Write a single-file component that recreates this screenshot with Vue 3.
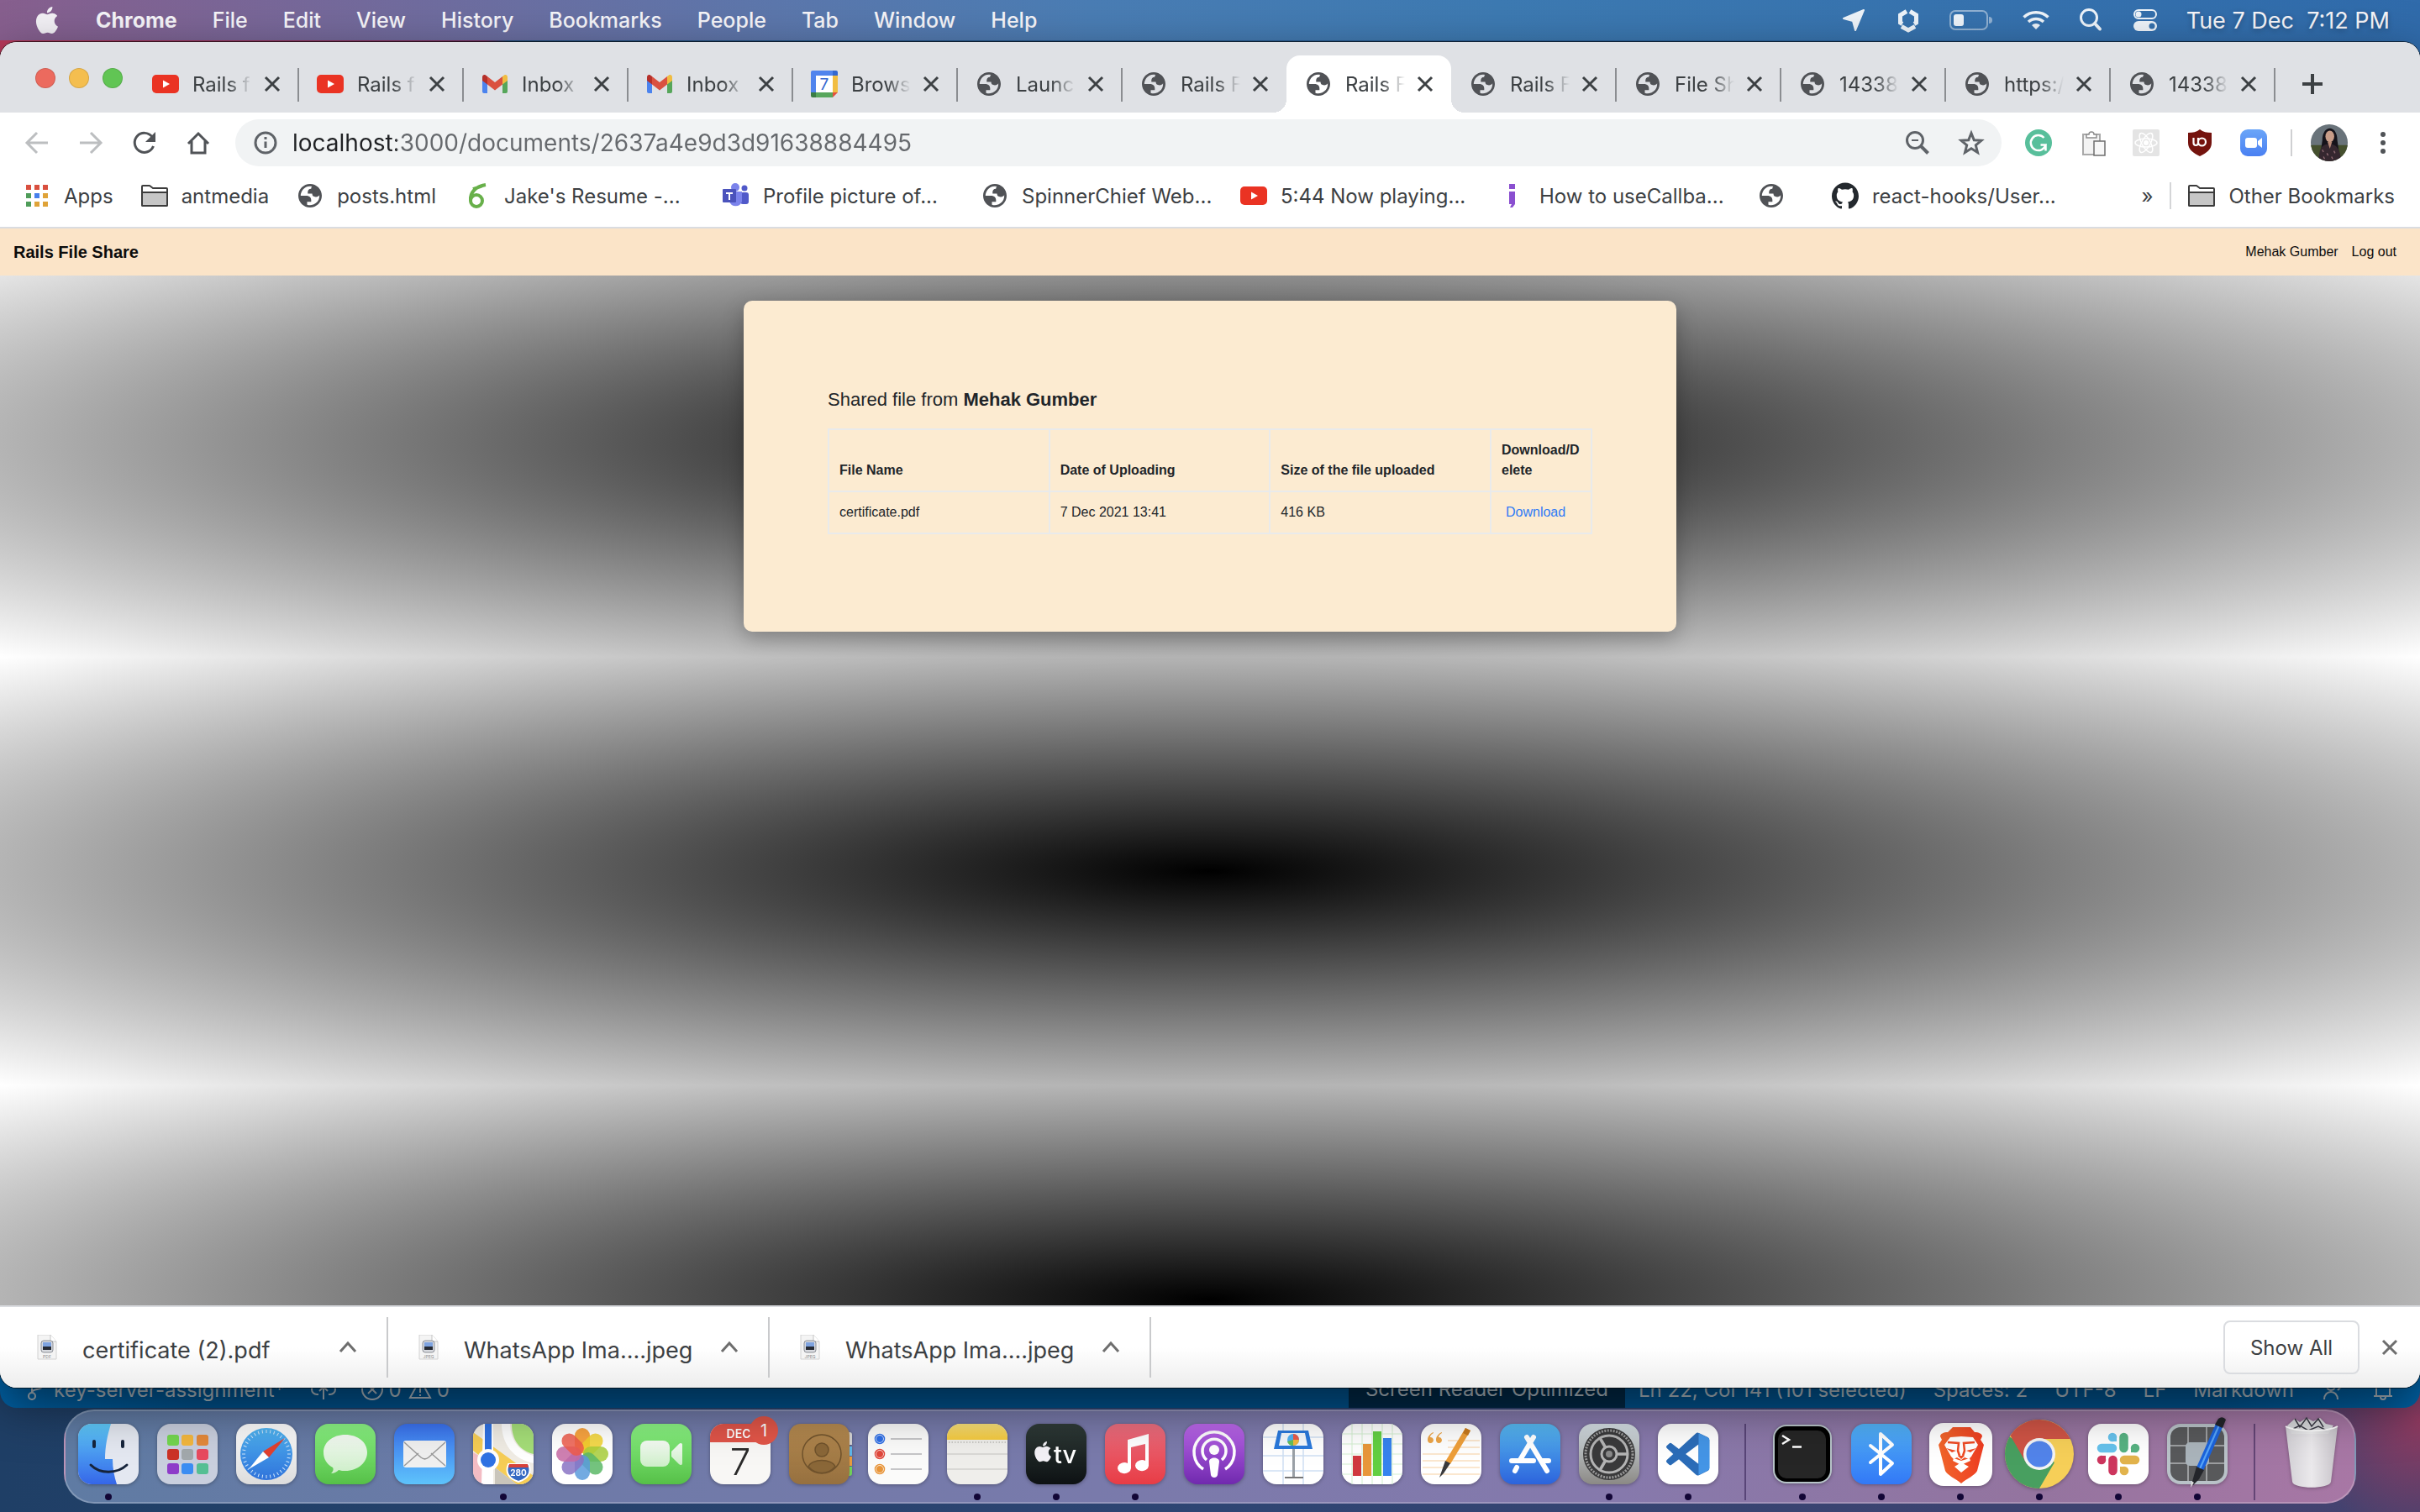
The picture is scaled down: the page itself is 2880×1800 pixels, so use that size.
<script setup>
const menus = ['File', 'Edit', 'View', 'History', 'Bookmarks', 'People', 'Tab', 'Window', 'Help']

const tabs = [
  { icon: 'youtube', title: 'Rails f' },
  { icon: 'youtube', title: 'Rails f' },
  { icon: 'gmail', title: 'Inbox' },
  { icon: 'gmail', title: 'Inbox' },
  { icon: 'calendar-fav', title: 'Brows' },
  { icon: 'globe', title: 'Launc' },
  { icon: 'globe', title: 'Rails F', bare: true },
  { icon: 'globe', title: 'Rails F', active: true },
  { icon: 'globe', title: 'Rails F' },
  { icon: 'globe', title: 'File Sh' },
  { icon: 'globe', title: '14338' },
  { icon: 'globe', title: 'https:/' },
  { icon: 'globe', title: '14338' },
]

const bookmarks = [
  { icon: 'apps', label: 'Apps' },
  { icon: 'folder', label: 'antmedia' },
  { icon: 'globe', label: 'posts.html' },
  { icon: 'overleaf', label: "Jake's Resume -...", wide: true },
  { icon: 'teams', label: 'Profile picture of...', wide: true },
  { icon: 'globe', label: 'SpinnerChief Web...', wide: true },
  { icon: 'youtube', label: '5:44 Now playing...', wide: true },
  { icon: 'semicolon', label: 'How to useCallba...', wide: true },
  { icon: 'globe', label: '' },
  { icon: 'github', label: 'react-hooks/User...', wide: true },
]

const extensions = ['grammarly', 'clipboard', 'react', 'ublock', 'zoom']

const downloads = [
  { name: 'certificate (2).pdf', kind: 'PDF' },
  { name: 'WhatsApp Ima....jpeg', kind: 'JPEG' },
  { name: 'WhatsApp Ima....jpeg', kind: 'JPEG' },
]

const files = [{ name: 'certificate.pdf', date: '7 Dec 2021 13:41', size: '416 KB' }]

const dock = [
  [
    { id: 'finder', open: true }, { id: 'launchpad' }, { id: 'safari' }, { id: 'messages' },
    { id: 'mail' }, { id: 'maps', open: true }, { id: 'photos' }, { id: 'facetime' },
    { id: 'calendar', badge: 1 }, { id: 'contacts' }, { id: 'reminders' }, { id: 'notes', open: true },
    { id: 'tv', open: true }, { id: 'music', open: true }, { id: 'podcasts' }, { id: 'keynote' },
    { id: 'numbers' }, { id: 'pages' }, { id: 'appstore' }, { id: 'preferences', open: true },
    { id: 'vscode', open: true },
  ],
  [
    { id: 'terminal', open: true }, { id: 'bluetooth', open: true }, { id: 'brave', open: true },
    { id: 'chrome', open: true }, { id: 'slack', open: true }, { id: 'xscope', open: true },
  ],
  [{ id: 'trash' }],
]

const ticks = Array.from({ length: 36 }, (_, i) => i * 10)
const petals = ['#f7941e', '#f2d22e', '#a8ce3a', '#5cb867', '#5b9bdc', '#8a74c4', '#c76aa5', '#ee5a4a']
</script>

<template>
  <div class="desktop">
    <svg class="defs" width="0" height="0" aria-hidden="true">
      <defs>
        <linearGradient id="gFinder" x2="0" y2="1"><stop stop-color="#5fcbfb" /><stop offset="1" stop-color="#3566e8" /></linearGradient>
        <linearGradient id="gPale" x2="0" y2="1"><stop stop-color="#fff" /><stop offset="1" stop-color="#dcdcdc" /></linearGradient>
        <linearGradient id="gGreen" x2="0" y2="1"><stop stop-color="#8bf484" /><stop offset="1" stop-color="#56c048" /></linearGradient>
        <linearGradient id="gBubble" x2="0" y2="1"><stop stop-color="#f6fcf5" /><stop offset="1" stop-color="#cdeec8" /></linearGradient>
        <linearGradient id="gMail" x2="0" y2="1"><stop stop-color="#3a70ee" /><stop offset="1" stop-color="#5ec3fb" /></linearGradient>
        <linearGradient id="gSafari" x2="0" y2="1"><stop stop-color="#4fb4f2" /><stop offset="1" stop-color="#2f72da" /></linearGradient>
        <linearGradient id="gRed" x2="0" y2="1"><stop stop-color="#ec6f80" /><stop offset="1" stop-color="#e83c45" /></linearGradient>
        <linearGradient id="gPurple" x2="0" y2="1"><stop stop-color="#bd68ec" /><stop offset="1" stop-color="#7029ae" /></linearGradient>
        <linearGradient id="gStore" x2="0" y2="1"><stop stop-color="#57b9f1" /><stop offset="1" stop-color="#2c63dc" /></linearGradient>
        <linearGradient id="gBt" x2="0" y2="1"><stop stop-color="#52b2f7" /><stop offset="1" stop-color="#3278f6" /></linearGradient>
        <linearGradient id="gTv" x2="0" y2="1"><stop stop-color="#2f3b38" /><stop offset="1" stop-color="#0d1113" /></linearGradient>
        <linearGradient id="gNote" x2="0" y2="1"><stop stop-color="#fbe27a" /><stop offset="1" stop-color="#f4c93e" /></linearGradient>
        <linearGradient id="gGrey" x2="0" y2="1"><stop stop-color="#d6e0e6" /><stop offset="1" stop-color="#8b8985" /></linearGradient>
        <linearGradient id="gBrown" x2="0" y2="1"><stop stop-color="#b58a50" /><stop offset="1" stop-color="#96703f" /></linearGradient>
        <linearGradient id="gBrave"><stop stop-color="#f1662b" /><stop offset="1" stop-color="#ee3d22" /></linearGradient>
        <linearGradient id="gZoom" x2="0" y2="1"><stop stop-color="#6aa5f8" /><stop offset="1" stop-color="#4a80f2" /></linearGradient>
        <linearGradient id="gTrash"><stop stop-color="#d5d5d8" /><stop offset=".5" stop-color="#f0f0f1" /><stop offset="1" stop-color="#c9c7cb" /></linearGradient>
        <clipPath id="tile"><rect width="72" height="72" rx="16" /></clipPath>
        <clipPath id="face"><circle cx="16" cy="16" r="16" /></clipPath>

        <!-- small icons, 32 x 32 -->
        <g id="i-youtube"><rect y="5" width="32" height="22" rx="5" fill="#ea3323" /><path d="M13 11.500v9l8-4.500z" fill="#fff" /></g>
        <g id="i-gmail">
          <path d="M1 8v17a2 2 0 0 0 2 2h4V13z" fill="#4b83ee" /><path d="M31 8v17a2 2 0 0 1-2 2h-4V13z" fill="#56a65a" />
          <path d="M25 7l2-1.500c2-1.300 4 .2 4 2.500v4l-6 4.500z" fill="#f0bc41" /><path d="M7 7L5 5.500C3 4.200 1 5.700 1 8v4l6 4.500z" fill="#b5302a" />
          <path d="M7 7l9 7 9-7v9.500l-9 7-9-7z" fill="#da5140" />
        </g>
        <g id="i-calendar-fav">
          <path d="M2 0h24v6H6v20H0V2a2 2 0 0 1 2-2z" fill="#5084ed" /><path d="M26 0h4a2 2 0 0 1 2 2v4h-6z" fill="#3367d0" />
          <path d="M26 6h6v20h-6z" fill="#f1bd42" /><path d="M6 26h20v6H6z" fill="#58a65c" /><path d="M0 26h6v6H2a2 2 0 0 1-2-2z" fill="#3a7d44" />
          <path d="M26 26h6l-6 6z" fill="#e4513f" /><path d="M6 6h20v20H6z" fill="#fff" />
          <text x="16" y="22.500" text-anchor="middle" font-size="19" font-family="Inter, sans-serif" fill="#3367d0">7</text>
        </g>
        <g id="i-globe"><path transform="translate(-.800 -.800) scale(1.400)" fill="#505256" fill-rule="evenodd" d="M12 2C6.480 2 2 6.480 2 12s4.480 10 10 10 10-4.480 10-10S17.520 2 12 2zM4 12h4.400c3.407.022 4.922 1.730 4.543 5.127H9.488v2.470a8.004 8.004 0 0 0 10.498-8.083C19.327 12.504 18.332 13 17 13c-2.137 0-3.206-.916-3.206-2.750h-3.748c-.274-2.728.683-4.092 2.870-4.092 0-.975.327-1.597.811-1.970A8.004 8.004 0 0 0 4 12z" /></g>
        <g id="i-apps">
          <path d="M3 3h6v6H3zM13 3h6v6h-6zM23 3h6v6h-6z" fill="#d9503f" /><path d="M3 13h6v6H3zM3 23h6v6H3z" fill="#4f9d5a" />
          <path d="M13 13h6v6h-6z" fill="#4680ec" /><path d="M23 13h6v6h-6zM13 23h6v6h-6zM23 23h6v6h-6z" fill="#dfa339" />
        </g>
        <g id="i-folder" stroke="#3c3c3c" stroke-width="2" stroke-linejoin="round"><path d="M1 27V5a1 1 0 0 1 1-1h8l4 3h16a1 1 0 0 1 1 1v19a1 1 0 0 1-1 1H2a1 1 0 0 1-1-1z" fill="#fff" /><path d="M1 12h30v15a1 1 0 0 1-1 1H2a1 1 0 0 1-1-1z" fill="#c6c6c6" /></g>
        <g id="i-overleaf" fill="none" stroke="#68b04a" stroke-width="4"><circle cx="15" cy="22" r="7" /><path d="M8 22C7 12 14 5 26 3M11 8c5-2 9-2 13-5" /></g>
        <g id="i-teams">
          <circle cx="15" cy="6" r="5" fill="#7b83eb" /><circle cx="26" cy="7" r="3.500" fill="#5059c9" /><rect x="21" y="12" width="10" height="14" rx="3" fill="#5059c9" />
          <path d="M8 11h15v12a8 8 0 0 1-15 0z" fill="#7b83eb" /><rect y="8" width="16" height="16" rx="1" fill="#4b53bc" /><path d="M4 12h8v2H9v7H7v-7H4z" fill="#fff" />
        </g>
        <g id="i-semicolon" fill="#8a4fd0"><path d="M12 2h7v6h-7zM12 11h7v15l-3 4h-3l2-4h-3z" /></g>
        <g id="i-github"><path transform="scale(1.333)" fill="#24292e" d="M12 .297c-6.630 0-12 5.373-12 12 0 5.303 3.438 9.800 8.205 11.385.6.113.820-.258.820-.577 0-.285-.010-1.040-.015-2.040-3.338.724-4.042-1.610-4.042-1.610C4.422 18.070 3.633 17.700 3.633 17.700c-1.087-.744.084-.729.084-.729 1.205.084 1.838 1.236 1.838 1.236 1.070 1.835 2.809 1.305 3.495.998.108-.776.417-1.305.760-1.605-2.665-.300-5.466-1.332-5.466-5.930 0-1.310.465-2.380 1.235-3.220-.135-.303-.540-1.523.105-3.176 0 0 1.005-.322 3.300 1.230.960-.267 1.980-.399 3-.405 1.020.006 2.040.138 3 .405 2.280-1.552 3.285-1.230 3.285-1.230.645 1.653.240 2.873.120 3.176.765.840 1.230 1.910 1.230 3.220 0 4.610-2.805 5.625-5.475 5.920.420.360.810 1.096.810 2.220 0 1.606-.015 2.896-.015 3.286 0 .315.210.690.825.570C20.565 22.092 24 17.592 24 12.297c0-6.627-5.373-12-12-12" /></g>
        <g id="i-back" fill="none" stroke="#bcbec0" stroke-width="3"><path d="M29 16H5M16 4L4 16l12 12" /></g>
        <g id="i-forward" fill="none" stroke="#bcbec0" stroke-width="3"><path d="M3 16h24M16 4l12 12-12 12" /></g>
        <g id="i-reload"><path d="M26.500 20A11.500 11.500 0 1 1 25 9" fill="none" stroke="#505357" stroke-width="3" /><path d="M29 3v12H17z" fill="#505357" /></g>
        <g id="i-home"><path d="M4 17L16 5l12 12M8 14v14h16V14" fill="none" stroke="#505357" stroke-width="3" /></g>
        <g id="i-info" fill="none" stroke="#5f6368" stroke-width="3"><circle cx="16" cy="16" r="12" /><path d="M16 14.500V22M16 9v3" /></g>
        <g id="i-zoomout" fill="none" stroke="#5f6368" stroke-width="3"><circle cx="13" cy="13" r="9.500" /><path d="M20 20l8.500 8.500" stroke-width="4" /><path d="M9 13h8" stroke-width="2" /></g>
        <g id="i-star"><path d="M16 4.500l3.300 8.200 8.700.6-6.700 5.600 2.200 8.600L16 22.800l-7.500 4.700 2.200-8.600L4 13.300l8.700-.6z" fill="none" stroke="#5f6368" stroke-width="3" /></g>
        <g id="i-grammarly"><circle cx="16" cy="16" r="16" fill="#58bf9b" /><path d="M22.500 10a9 9 0 1 0 2 8.500h-6M24.500 25.500v-7" fill="none" stroke="#fff" stroke-width="2.500" /></g>
        <g id="i-clipboard"><path d="M5 6h20v24H5z" fill="#f3f3f3" stroke="#a9a9a9" stroke-width="2" /><path d="M9 10V6h3c0-4 6-4 6 0h3v4z" fill="#fff" stroke="#8d8d8d" stroke-width="1.500" /><path d="M18 14h13v17H18z" fill="#f7f7f7" stroke="#6e6e6e" stroke-width="1.500" /></g>
        <g id="i-react"><rect width="32" height="32" rx="2" fill="#e4e4e4" /><g fill="none" stroke="#fff" stroke-width="1.500"><ellipse cx="16" cy="16" rx="13" ry="5" /><ellipse cx="16" cy="16" rx="13" ry="5" transform="rotate(60 16 16)" /><ellipse cx="16" cy="16" rx="13" ry="5" transform="rotate(120 16 16)" /></g><circle cx="16" cy="16" r="3" fill="#fff" /></g>
        <g id="i-ublock"><path d="M16 0c4 3 8 4 14 4v12c0 8-6 12-14 16C8 28 2 24 2 16V4c6 0 10-1 14-4z" fill="#74130e" /><path d="M8.500 10v6c0 4 5.500 4 5.500 0v-6M14 15a4.500 4.500 0 1 0 9 0 4.500 4.500 0 1 0-9 0" fill="none" stroke="#fff" stroke-width="2.200" /></g>
        <g id="i-zoom"><rect width="32" height="32" rx="9" fill="url(#gZoom)" /><rect x="6" y="10" width="14" height="12" rx="3" fill="#fff" /><path d="M21 14l5-4v12l-5-4z" fill="#fff" /></g>
        <g id="i-avatar" clip-path="url(#face)"><path d="M0 0h32v32H0z" fill="#69737a" /><path d="M0 18h32v14H0z" fill="#45502e" /><path d="M10 14c0-14 13-14 13 0l2 14H8z" fill="#15131a" /><path d="M7 32c0-12 3-15 9-15s10 4 10 15z" fill="#35272f" /><ellipse cx="16.500" cy="10.500" rx="3.800" ry="5" fill="#c79c88" /><path d="M14.500 15h4l-2 6z" fill="#b98a76" /><path d="M10 22l1 2M14 25l1 2M20 23l1 2M18 28l1 2M11 28l1 2" stroke="#8f6a72" /></g>
        <g id="i-dots" fill="#505357"><circle cx="16" cy="4" r="3" /><circle cx="16" cy="14" r="3" /><circle cx="16" cy="24" r="3" /></g>
        <g id="i-close" stroke="currentColor" stroke-width="3" fill="none"><path d="M8 8l16 16M24 8L8 24" /></g>
        <g id="i-plus" stroke="#3c4043" stroke-width="4" fill="none"><path d="M16 4v24M4 16h24" /></g>
        <g id="i-caret" stroke="#6e6e6e" stroke-width="3" fill="none"><path d="M7 21l9-10 9 10" /></g>
        <g id="i-apple"><path transform="scale(1.333)" d="M12.152 6.896c-.948 0-2.415-1.078-3.960-1.040-2.040.027-3.910 1.183-4.961 3.014-2.117 3.675-.546 9.103 1.519 12.090 1.013 1.454 2.208 3.090 3.792 3.039 1.520-.065 2.090-.987 3.935-.987 1.831 0 2.350.987 3.960.948 1.637-.026 2.676-1.480 3.676-2.948 1.156-1.688 1.636-3.325 1.662-3.415-.039-.013-3.182-1.221-3.220-4.857-.026-3.040 2.480-4.494 2.597-4.559-1.429-2.090-3.623-2.324-4.390-2.376-2-.156-3.675 1.090-4.610 1.090zM15.530 3.830c.843-1.012 1.400-2.427 1.245-3.830-1.207.052-2.662.805-3.532 1.818-.780.896-1.454 2.338-1.273 3.714 1.338.104 2.715-.688 3.559-1.701" fill="#f3f1f6" /></g>
        <g id="i-location"><path d="M28 4L18 28l-3-11L4 14z" fill="#eef4fa" stroke="#eef4fa" stroke-width="2" stroke-linejoin="round" /></g>
        <g id="i-hex" fill="none" stroke="#eef4fa" stroke-width="5"><path d="M14 5.500L6.500 10v9l2.500 1.500M18 5.500l7.500 4.500v9L23 20.500M8 23.500l8 4.500 8-4.500" /></g>
        <g id="i-wifi" fill="none" stroke="#eef4fa" stroke-width="3.500"><path d="M1.500 12.500a21 21 0 0 1 29 0M7 18a13 13 0 0 1 18 0" /><path d="M16 27l-5-5a7 7 0 0 1 10 0z" fill="#eef4fa" stroke="none" /></g>
        <g id="i-search" fill="none" stroke="#eef4fa" stroke-width="3"><circle cx="14" cy="13" r="9.500" /><path d="M21 20l6 6.500" stroke-width="4" stroke-linecap="round" /></g>
        <g id="i-control"><rect x="3" y="4" width="26" height="10" rx="5" fill="none" stroke="#eef4fa" stroke-width="2" /><circle cx="8" cy="9" r="3.500" fill="#eef4fa" /><rect x="2" y="17" width="28" height="12" rx="6" fill="#eef4fa" /><circle cx="24" cy="23" r="3.500" fill="#3570ac" /></g>
        <g id="i-branch" fill="none" stroke="#a9b5be" stroke-width="2"><circle cx="12" cy="24" r="4" /><circle cx="12" cy="5" r="4" /><circle cx="24" cy="8" r="4" /><path d="M12 9v11M24 12c0 6-12 2-12 8" /></g>
        <g id="i-cloud" fill="none" stroke="#a9b5be" stroke-width="2"><path d="M10 22H8a6 6 0 0 1 0-12 8 8 0 0 1 16 0 6 6 0 0 1 0 12h-2M16 28V14M11 18l5-5 5 5" /></g>
        <g id="i-error" fill="none" stroke="#a9b5be" stroke-width="2"><circle cx="16" cy="16" r="12" /><path d="M11 11l10 10M21 11L11 21" /></g>
        <g id="i-warn" fill="none" stroke="#a9b5be" stroke-width="2"><path d="M16 4l12 22H4zM16 12v8M16 22v2" /></g>
        <g id="i-person" fill="none" stroke="#a9b5be" stroke-width="2"><circle cx="12" cy="12" r="5" /><path d="M4 28c0-12 16-12 16 0M18 4h10v9h-4l-4 4" /></g>
        <g id="i-bell" fill="none" stroke="#a9b5be" stroke-width="2"><path d="M5 24h22M8 24V12a8 8 0 0 1 16 0v12M13 25a3 3 0 0 0 6 0" /></g>

        <!-- dock icons, 72 x 72 -->
        <g id="d-finder" clip-path="url(#tile)">
          <rect width="72" height="72" fill="#e4e8f1" /><path d="M0 0h39c-4 13-7 27-7 42h9c0 11 2 21 5 30H0z" fill="url(#gFinder)" />
          <path d="M19 21v6M53 21v6" stroke="#16243b" stroke-width="4" stroke-linecap="round" /><path d="M15 49c11 11 31 11 43 0" fill="none" stroke="#16243b" stroke-width="3" stroke-linecap="round" />
        </g>
        <g id="d-launchpad">
          <rect width="72" height="72" rx="16" fill="#c9cfde" />
          <rect x="12" y="13" width="14" height="13" rx="3" fill="#73d64f" /><rect x="29" y="13" width="14" height="13" rx="3" fill="#f3b73f" /><rect x="47" y="13" width="14" height="13" rx="3" fill="#e4893a" />
          <rect x="12" y="30" width="14" height="13" rx="3" fill="#cc3227" /><rect x="29" y="30" width="14" height="13" rx="3" fill="#a2a8ac" /><rect x="47" y="30" width="14" height="13" rx="3" fill="#e84a5f" />
          <rect x="12" y="47" width="14" height="13" rx="3" fill="#8e3bc9" /><rect x="29" y="47" width="14" height="13" rx="3" fill="#3b8df2" /><rect x="47" y="47" width="14" height="13" rx="3" fill="#55bf93" />
        </g>
        <g id="d-safari">
          <rect width="72" height="72" rx="16" fill="url(#gPale)" /><circle cx="36" cy="36" r="31" fill="url(#gSafari)" />
          <path v-for="t in ticks" :key="t" d="M36 7v4" stroke="#cfe5fa" :transform="`rotate(${t} 36 36)`" />
          <path d="M58 17L32 33l7 7z" fill="#e2402f" /><path d="M15 54l17-21 7 7z" fill="#fff" />
        </g>
        <g id="d-messages"><rect width="72" height="72" rx="16" fill="url(#gGreen)" /><path d="M36 13c15 0 26 9 26 21S51 56 36 56c-3 0-5 0-8-1-2 2-5 4-9 4 3-3 3-5 2-7-7-4-11-10-11-18 0-12 11-21 26-21z" fill="url(#gBubble)" /></g>
        <g id="d-mail"><rect width="72" height="72" rx="16" fill="url(#gMail)" /><rect x="11" y="20" width="51" height="32" rx="3" fill="#f0f0f0" /><path d="M12 22l20 18c3 2.500 6 2.500 9 0l20-18M12 50l17-15M61 50L44 35" fill="none" stroke="#9a9a9a" stroke-width="1.500" /></g>
        <g id="d-maps" clip-path="url(#tile)">
          <rect width="72" height="72" fill="#f0ece4" /><path d="M46 0h26v36c-16-4-26-16-26-36z" fill="#a5de78" /><path d="M34 0h10c0 22 14 34 28 38v9C48 42 34 24 34 0z" fill="#fff" />
          <path d="M0 10l72 52v10H52L0 32z" fill="#f6cd55" /><path d="M0 34l14 8v30H0z" fill="#f3bcc4" /><path d="M12 0h12v72H10z" fill="#fff" /><path d="M14 0h8v36h-8z" fill="#2f72e3" />
          <path d="M26 52l26 20H26z" fill="#c9c5bb" /><circle cx="18" cy="43" r="13" fill="#fff" /><circle cx="18" cy="43" r="9" fill="#2f72e3" />
          <path d="M42 48h24c4 10 0 17-12 21-12-4-16-11-12-21z" fill="#3468c2" stroke="#fff" stroke-width="2" /><path d="M43 48h22l1 4H42z" fill="#d8423a" /><text x="54" y="62" text-anchor="middle" font-size="10" font-weight="700" font-family="Inter, sans-serif" fill="#fff">280</text>
        </g>
        <g id="d-photos"><rect width="72" height="72" rx="16" fill="#fff" /><rect v-for="(c, i) in petals" :key="c" x="27" y="5" width="18" height="30" rx="9" :fill="c" fill-opacity=".85" :transform="`rotate(${i * 45} 36 36)`" /></g>
        <g id="d-facetime"><rect width="72" height="72" rx="16" fill="url(#gGreen)" /><rect x="11" y="20" width="35" height="31" rx="8" fill="url(#gBubble)" /><path d="M48 33l9-9c2-2 4-1 4 1v22c0 2-2 3-4 1l-9-9z" fill="url(#gBubble)" /></g>
        <g id="d-calendar" clip-path="url(#tile)"><rect width="72" height="72" fill="#f8f7f5" /><rect width="72" height="22" fill="#df5449" /><text x="34" y="17" text-anchor="middle" font-size="14" font-weight="600" font-family="Inter, sans-serif" fill="#fff">DEC</text><text x="36" y="61" text-anchor="middle" font-size="44" font-family="Inter, sans-serif" font-weight="300" fill="#2a2a2a">7</text></g>
        <g id="d-contacts"><path d="M60 10h12q3 0 3 3v12H60z" fill="#d4d4d4" /><path d="M60 27h15v11H60z" fill="#5eb6ea" /><path d="M60 39h15v11H60z" fill="#e89b3d" /><path d="M60 51h15v8q0 3-3 3H60z" fill="#6fcf58" /><rect width="72" height="72" rx="14" fill="url(#gBrown)" /><g fill="none" stroke="#6f522c" stroke-width="1.500"><circle cx="39" cy="36" r="23" /><circle cx="39" cy="31" r="8" fill="#8a6738" /><path d="M23 51c4-10 28-10 32 0-9 10-23 10-32 0z" fill="#8a6738" /></g></g>
        <g id="d-reminders"><rect width="72" height="72" rx="16" fill="#fbfbfa" /><path d="M27 18h37M27 36h37M27 54h37" stroke="#c6c6c8" stroke-width="2" /><g stroke-width="1.500"><circle cx="14" cy="18" r="5.500" fill="#fff" stroke="#2f6fe6" /><circle cx="14" cy="18" r="4" fill="#2f6fe6" /><circle cx="14" cy="36" r="5.500" fill="#fff" stroke="#e0483c" /><circle cx="14" cy="36" r="4" fill="#e0483c" /><circle cx="14" cy="54" r="5.500" fill="#fff" stroke="#e8953a" /><circle cx="14" cy="54" r="4" fill="#e8953a" /></g></g>
        <g id="d-notes" clip-path="url(#tile)"><rect width="72" height="72" fill="#efeeeb" /><rect width="72" height="19" fill="url(#gNote)" /><path d="M0 36h72M0 54h72" stroke="#d2d1ce" stroke-width="1.500" /><path d="M2 22h70" stroke="#bdbcb8" stroke-width="1.500" stroke-dasharray="1.500 2" /></g>
        <g id="d-tv"><rect width="72" height="72" rx="16" fill="url(#gTv)" /><use href="#i-apple" transform="translate(8 21) scale(.760)" /><text x="33" y="47" font-size="29" font-weight="500" font-family="Inter, sans-serif" fill="#fff">tv</text></g>
        <g id="d-music"><rect width="72" height="72" rx="16" fill="url(#gRed)" /><path d="M27 19l25-7v38a8 6.500 0 1 1-4-6V24l-17 4v25a8 6.500 0 1 1-4-6z" fill="#fff" /></g>
        <g id="d-podcasts"><rect width="72" height="72" rx="16" fill="url(#gPurple)" /><g fill="none" stroke="#fff" stroke-width="3.500"><path d="M23 54a24 24 0 1 1 26 0" /><path d="M27 43a14 14 0 1 1 18 0" /></g><circle cx="36" cy="31" r="6" fill="#fff" /><path d="M30 45c0-6 12-6 12 0l-2 16c-1 4-7 4-8 0z" fill="#fff" /></g>
        <g id="d-keynote"><rect width="72" height="72" rx="16" fill="#fff" /><path d="M0 16h72M24 0v72M48 0v72M0 38h72M0 56h72" stroke="#cfe0f3" stroke-width="1.500" /><path d="M35 30h3v34h-3z" fill="#9aa0a6" /><path d="M26 63h22v2H26z" fill="#777" /><path d="M18 8h36l5 22H13z" fill="#2a79dc" /><path d="M22 11h28l3 15H19z" fill="#f4f8fd" /><circle cx="36" cy="19" r="7" fill="#4fb0f2" /><path d="M36 19v-7a7 7 0 0 1 7 7z" fill="#eb5a4a" /><path d="M36 19h7a7 7 0 0 1-7 7z" fill="#f3b93f" /><path d="M36 19v7a7 7 0 0 1-7-5z" fill="#66bf5c" /></g>
        <g id="d-numbers"><rect width="72" height="72" rx="16" fill="#fff" /><path d="M12 0v72M24 0v72M36 0v72M48 0v72M60 0v72M0 12h72M0 24h72M0 36h72M0 48h72M0 60h72" stroke="#d3efd0" /><path d="M13 38h10v24H13z" fill="#d0393f" /><path d="M25 24h10v38H25z" fill="#e8973a" /><path d="M37 9h10v53H37z" fill="#62cf42" /><path d="M49 17h10v45H49z" fill="#3683ee" /></g>
        <g id="d-pages"><rect width="72" height="72" rx="16" fill="#fff" /><path d="M2 36h68M2 44h68M2 52h68M2 60h68M32 20h38M32 28h38" stroke="#fae0c0" stroke-width="1.500" /><path d="M15 10c-5 2-7 6-7 9a3.500 3.500 0 1 0 3-3c0-2 1-3 4-5zM25 10c-5 2-7 6-7 9a3.500 3.500 0 1 0 3-3c0-2 1-3 4-5z" fill="#eda548" /><path d="M53 5l6 3-24 40-6-3z" fill="#ee9f3a" /><path d="M29 44l6 3-8 12-5 5z" fill="#3a3a3c" /><path d="M53 5l6 3-3 6-6-3z" fill="#c77a1e" /></g>
        <g id="d-appstore"><rect width="72" height="72" rx="16" fill="url(#gStore)" /><g stroke="#fff" stroke-width="6" stroke-linecap="round"><path d="M40 16L24 43M32 16l24 40M14 44h26M49 44h9M20 52l-2 4" /></g></g>
        <g id="d-preferences"><rect width="72" height="72" rx="16" fill="url(#gGrey)" /><circle cx="36" cy="36" r="31" fill="#3a3a3b" /><circle cx="36" cy="36" r="28" fill="none" stroke="#9a9a9a" stroke-width="3" stroke-dasharray="2 1.500" /><circle cx="36" cy="36" r="22" fill="none" stroke="#b4b4b4" stroke-width="3" /><circle cx="36" cy="36" r="9" fill="none" stroke="#b4b4b4" stroke-width="3" /><path d="M45 36h14M31.500 28l-7-12M31.500 44l-7 12" stroke="#b4b4b4" stroke-width="3.500" /><circle cx="36" cy="36" r="4" fill="#8a8a8a" /></g>
        <g id="d-vscode"><rect width="72" height="72" rx="16" fill="#fff" /><path transform="translate(10 10.500) scale(2.130)" fill="#2b6cb8" d="M23.150 2.587L18.210.210a1.494 1.494 0 0 0-1.705.290l-9.460 8.630-4.120-3.128a.999.999 0 0 0-1.276.057L.327 7.261A1 1 0 0 0 .326 8.740L3.899 12 .326 15.260a1 1 0 0 0 .001 1.479L1.650 17.940a.999.999 0 0 0 1.276.057l4.120-3.128 9.460 8.630a1.492 1.492 0 0 0 1.704.290l4.942-2.377A1.500 1.500 0 0 0 24 20.060V3.939a1.500 1.500 0 0 0-.850-1.352zm-5.146 14.861L10.826 12l7.178-5.448v10.896z" /><path d="M48.500 11l11 5.500q2 1 2 3v33q0 2-2 3l-11 5.500z" fill="#4495e6" /></g>
        <g id="d-terminal"><rect x="1" y="1" width="70" height="70" rx="16" fill="#b7c4c8" /><rect x="3" y="3" width="66" height="66" rx="14" fill="#000" /><rect x="7" y="8" width="57" height="57" rx="10" fill="#262626" /><path d="M12 14l8 5-8 5M24 27.500h11" fill="none" stroke="#fff" stroke-width="2.500" /></g>
        <g id="d-bluetooth"><rect width="72" height="72" rx="16" fill="url(#gBt)" /><path d="M23 26l26 21-14 13V12l14 13-26 21" fill="none" stroke="#fff" stroke-width="4" stroke-linejoin="round" stroke-linecap="round" /></g>
        <g id="d-brave">
          <rect x="-1" y="-1" width="75" height="75" rx="17" fill="#fff" />
          <path d="M27 4h21l5 6c5 0 9 2 9 5l-2 4 4 6-8 31c-2 5-12 9-19 15-7-6-17-10-19-15l-8-31 4-6-2-4c0-3 4-5 9-5z" fill="url(#gBrave)" />
          <path d="M24 16l13-1 14 1 6 9-8 14-3 3-5-2-4 3-5-3-4 2-3-3-8-14z" fill="#fff" /><path d="M28 41l9 3 10-3 1 3-11 5-10-5zM29 51l8-5 9 5-9 7z" fill="#fff" />
          <path d="M21 22l13 1-1 9 2 6M53 22l-13 1 1 9-2 6" fill="none" stroke="#ee4a24" stroke-width="2.500" /><path d="M19 29l12 3-5 2zM55 29l-12 3 5 2z" fill="#ee4a24" /><path d="M33 38h8l-4 4z" fill="#ee4a24" />
        </g>
        <g id="d-chrome"><circle cx="36" cy="36" r="41" fill="#f6cf58" /><path d="M36 36L.500 15.500A41 41 0 0 0 36 77l18-31z" fill="#489f60" /><path d="M36 18H72.800A41 41 0 0 0 1.500 14L20 46z" fill="#cf5445" /><circle cx="36" cy="36" r="19" fill="#f4f4f4" /><circle cx="36" cy="36" r="15.500" fill="#5284ea" /></g>
        <g id="d-slack"><rect width="72" height="72" rx="16" fill="#fff" /><g stroke-width="10.500" stroke-linecap="round"><path d="M16 29h13M29 16v.1" stroke="#67c2ec" /><path d="M42.500 16v13M56 29v.1" stroke="#57b282" /><path d="M29.500 43v13M16 43v.1" stroke="#cd365e" /><path d="M43 43h13M43 56v.1" stroke="#e2b34c" /></g><path d="M29 16h5v5h-5z" fill="#67c2ec" /><path d="M51 29h5v5h-5z" fill="#57b282" /><path d="M16 38h5v5h-5z" fill="#cd365e" /><path d="M38 51h5v5h-5z" fill="#e2b34c" /></g>
        <g id="d-xscope"><rect width="72" height="72" rx="16" fill="#b9c2c8" /><rect x="4" y="4" width="64" height="64" rx="12" fill="#58595b" /><path d="M4 26h64M4 47h64M25 4v64M47 4v64" stroke="#b3b5b8" stroke-width="1.500" /><rect x="22" y="22" width="28" height="28" rx="5" fill="#aab4bb" /><path d="M58 0l8 4-23 52-8-4z" fill="#1b63dc" /><path d="M61 1l2 1-23 52-2-1z" fill="#58a5f7" /><path d="M61-6q5-4 9 1l-4 10-9-4z" fill="#22252b" /><path d="M35 51l9 4-6 11-7 7-2-1z" fill="#23252a" /><path d="M29 68l3 2-4 6z" fill="#ddd" /></g>
        <g id="d-trash"><path d="M7 2l9-8 6 4 8-5 8 4 8-4 7 7 9 2-6 10H12z" fill="#d9dadd" /><path d="M16-6l6 10 8-11 6 10 8-9 6 10M14 6l8-4 10 6 12-5 10 5" fill="none" stroke="#3b3b46" stroke-width="1.500" /><path d="M5 3c12 7 50 7 62 0l-8 66c-1 9-45 9-46 0z" fill="url(#gTrash)" opacity=".95" /><path d="M5 3c12 7 50 7 62 0" fill="none" stroke="#fff" stroke-width="2" /></g>
      </defs>
    </svg>

    <header class="menubar">
      <button class="apple" aria-label="Apple menu"><svg class="ic" viewBox="0 0 32 32"><use href="#i-apple" /></svg></button>
      <button class="app-name">Chrome</button>
      <button v-for="m in menus" :key="m">{{ m }}</button>
      <div class="status">
        <svg class="ic" viewBox="0 0 32 32"><use href="#i-location" /></svg>
        <svg class="ic" viewBox="0 0 32 32"><use href="#i-hex" /></svg>
        <span class="battery"><span class="charge"></span></span>
        <svg class="ic" viewBox="0 0 32 32"><use href="#i-wifi" /></svg>
        <svg class="ic" viewBox="0 0 32 32"><use href="#i-search" /></svg>
        <svg class="ic" viewBox="0 0 32 32"><use href="#i-control" /></svg>
        <time>Tue 7 Dec&nbsp; 7:12 PM</time>
      </div>
    </header>

    <section class="window">
      <div class="tabstrip">
        <div class="lights"><button class="red" aria-label="Close window"></button><button class="amber" aria-label="Minimise"></button><button class="green" aria-label="Full screen"></button></div>
        <div v-for="(t, i) in tabs" :key="i" class="tab" :class="{ active: t.active, bare: t.bare }">
          <svg class="ic" viewBox="0 0 32 32"><use :href="'#i-' + t.icon" /></svg>
          <span class="title">{{ t.title }}</span>
          <button class="close" aria-label="Close tab"><svg class="ic" viewBox="0 0 32 32"><use href="#i-close" /></svg></button>
        </div>
        <button class="new-tab" aria-label="New tab"><svg class="ic" viewBox="0 0 32 32"><use href="#i-plus" /></svg></button>
      </div>

      <div class="toolbar">
        <button v-for="n in ['back', 'forward', 'reload', 'home']" :key="n" class="tool" :aria-label="n"><svg class="ic" viewBox="0 0 32 32"><use :href="'#i-' + n" /></svg></button>
        <div class="omnibox">
          <svg class="ic" viewBox="0 0 32 32"><use href="#i-info" /></svg>
          <input type="text" aria-label="Address" value="localhost:3000/documents/2637a4e9d3d91638884495" />
          <button class="tool" aria-label="Zoom"><svg class="ic" viewBox="0 0 32 32"><use href="#i-zoomout" /></svg></button>
          <button class="tool" aria-label="Bookmark this page"><svg class="ic" viewBox="0 0 32 32"><use href="#i-star" /></svg></button>
        </div>
        <button v-for="n in extensions" :key="n" class="tool" :aria-label="n"><svg class="ic" viewBox="0 0 32 32"><use :href="'#i-' + n" /></svg></button>
        <span class="rule"></span>
        <button class="avatar" aria-label="Profile"><svg viewBox="0 0 32 32"><use href="#i-avatar" /></svg></button>
        <button class="tool" aria-label="Menu"><svg class="ic" viewBox="0 -2 32 32"><use href="#i-dots" /></svg></button>
      </div>

      <nav class="bookmarks" aria-label="Bookmarks">
        <a v-for="(b, i) in bookmarks" :key="i" href="#" :class="{ wide: b.wide }" :aria-label="b.label || 'Bookmark'">
          <svg class="ic" viewBox="0 0 32 32"><use :href="'#i-' + b.icon" /></svg><span v-if="b.label">{{ b.label }}</span>
        </a>
        <button class="more" aria-label="More bookmarks">»</button>
        <a href="#" class="other"><svg class="ic" viewBox="0 0 32 32"><use href="#i-folder" /></svg><span>Other Bookmarks</span></a>
      </nav>

      <main class="page">
        <nav class="navbar">
          <a href="#" class="brand">Rails File Share</a>
          <a href="#">Mehak Gumber</a>
          <a href="#">Log out</a>
        </nav>
        <section class="card">
          <p>Shared file from <strong>Mehak Gumber</strong></p>
          <table>
            <thead>
              <tr><th>File Name</th><th>Date of Uploading</th><th>Size of the file uploaded</th><th class="action">Download/Delete</th></tr>
            </thead>
            <tbody>
              <tr v-for="f in files" :key="f.name"><td>{{ f.name }}</td><td>{{ f.date }}</td><td>{{ f.size }}</td><td><a href="#">Download</a></td></tr>
            </tbody>
          </table>
        </section>
      </main>

      <footer class="shelf">
        <div v-for="(d, i) in downloads" :key="i" class="download">
          <svg class="file" viewBox="0 0 24 30"><path d="M1 0h15l7 8v21H1z" fill="#f4f4f4" stroke="#d2d2d2" /><path d="M16 0v8h7" fill="#fff" stroke="#c4c4c4" /><rect x="5" y="7" width="14" height="14" rx="3" fill="#d9dbe0" stroke="#8b8f96" /><path d="M7 9h10v5H7z" fill="#7ea3e0" /><path d="M7 14h10v4H7z" fill="#262b35" /><text x="12" y="28" text-anchor="middle" font-size="5" fill="#8a8a8a">{{ d.kind }}</text></svg>
          <span>{{ d.name }}</span>
          <button aria-label="Options"><svg class="ic" viewBox="0 0 32 32"><use href="#i-caret" /></svg></button>
        </div>
        <button class="show-all">Show All</button>
        <button class="shelf-close" aria-label="Close"><svg class="ic" viewBox="0 0 32 32"><use href="#i-close" /></svg></button>
      </footer>
    </section>

    <div class="statusbar">
      <svg class="ic" viewBox="0 0 32 32"><use href="#i-branch" /></svg><span class="branch">key-server-assignment*</span>
      <svg class="ic sync" viewBox="0 0 32 32"><use href="#i-cloud" /></svg>
      <svg class="ic" viewBox="0 0 32 32"><use href="#i-error" /></svg><span class="count">0</span>
      <svg class="ic" viewBox="0 0 32 32"><use href="#i-warn" /></svg><span class="count">0</span>
      <span class="reader">Screen Reader Optimized</span>
      <span>Ln 22, Col 141 (101 selected)</span>
      <span>Spaces: 2</span><span>UTF-8</span><span>LF</span><span>Markdown</span>
      <svg class="ic person" viewBox="0 0 32 32"><use href="#i-person" /></svg>
      <svg class="ic" viewBox="0 0 32 32"><use href="#i-bell" /></svg>
    </div>

    <nav class="dock" aria-label="Dock">
      <div v-for="(group, g) in dock" :key="g" class="group">
        <button v-for="a in group" :key="a.id" :aria-label="a.id" :class="{ open: a.open }">
          <svg viewBox="0 0 72 72"><use :href="'#d-' + a.id" /></svg>
          <span v-if="a.badge" class="badge">{{ a.badge }}</span>
        </button>
      </div>
    </nav>
  </div>
</template>

<style>
html,
body {
  margin: 0;
  background: #1f3f66;
}
</style>

<style scoped>
* {
  box-sizing: border-box;
}
button {
  padding: 0;
  border: 0;
  background: none;
  color: inherit;
  font: inherit;
}
a {
  color: inherit;
  text-decoration: none;
}
.defs {
  position: absolute;
}
.ic {
  flex: none;
  width: 32px;
  height: 32px;
  display: block;
  overflow: visible;
}
.desktop {
  min-height: 100vh;
  display: flex;
  flex-direction: column;
  overflow: hidden;
  font-family: Inter, "Noto Sans", sans-serif;
  font-size: 24px;
  color: #3c4043;
  background:
    radial-gradient(circle at 100% 94%, #8f3a60, rgba(143, 58, 96, 0) 140px),
    linear-gradient(90deg, #b8385a, #7a3060 20%, #24507e 21%, #2f6bab) 0 0 / 100% 100px no-repeat,
    linear-gradient(90deg, #1f3f66, #2e4573 50%, #45426f);
}

.menubar {
  height: 48px;
  display: flex;
  align-items: center;
  gap: 42px;
  padding: 0 36px 0 40px;
  font-size: 25px;
  font-weight: 500;
  color: #f6f5f9;
  text-shadow: 0 2px 6px rgba(0, 0, 0, 0.3);
  background: linear-gradient(90deg, #875f8e, #736a9c 15%, #5c77ac 32%, #4a7db4 45%, #3d7ab2 62%, #306bab);
}
.menubar .app-name {
  font-weight: 700;
}
.apple {
  width: 32px;
}
.status {
  display: flex;
  align-items: center;
  gap: 33px;
  margin-left: auto;
}
.status time {
  font-size: 27px;
  font-weight: 400;
}
.battery {
  position: relative;
  width: 46px;
  height: 24px;
  margin-right: 8px;
  padding: 3px;
  border: 2px solid rgba(255, 255, 255, 0.45);
  border-radius: 7px;
}
.battery::after {
  content: "";
  position: absolute;
  top: 6px;
  right: -7px;
  width: 4px;
  height: 8px;
  border-radius: 0 4px 4px 0;
  background: rgba(255, 255, 255, 0.45);
}
.charge {
  display: block;
  width: 12px;
  height: 14px;
  border-radius: 3px;
  background: #eef4fa;
}

.window {
  position: relative;
  z-index: 1;
  flex: 1;
  display: flex;
  flex-direction: column;
  margin-top: 2px;
  border-radius: 20px;
  background: #fff;
  box-shadow: 0 0 0 1px rgba(0, 0, 0, 0.6), 0 20px 60px rgba(0, 0, 0, 0.5);
  overflow: hidden;
}
.tabstrip {
  display: flex;
  align-items: flex-end;
  height: 84px;
  background: #dfe1e5;
}
.lights {
  display: flex;
  gap: 16px;
  width: 159px;
  padding: 0 0 29px 42px;
}
.lights button {
  width: 24px;
  height: 24px;
  border: 1px solid rgba(0, 0, 0, 0.12);
  border-radius: 50%;
}
.red {
  background: #ec6a5e;
}
.amber {
  background: #f4be4f;
}
.green {
  background: #61c554;
}
.tab {
  position: relative;
  flex: 0 1 196px;
  min-width: 0;
  height: 68px;
  display: flex;
  align-items: center;
  padding: 0 15px 0 22px;
}
.tab::after {
  content: "";
  position: absolute;
  right: -1px;
  top: 15px;
  width: 2px;
  height: 40px;
  background: #8b8d91;
}
.tab.active::after,
.tab.bare::after {
  display: none;
}
.tab.active {
  border-radius: 16px 16px 0 0;
  background: #fff;
}
.tab.active::before {
  content: "";
  position: absolute;
  inset: auto -16px 0;
  height: 16px;
  background:
    radial-gradient(circle at 0 0, transparent 16px, #fff 16px) 0 0 / 16px 16px no-repeat,
    radial-gradient(circle at 100% 0, transparent 16px, #fff 16px) 100% 0 / 16px 16px no-repeat;
}
.title {
  flex: 1;
  min-width: 0;
  margin: 0 8px 0 16px;
  overflow: hidden;
  white-space: nowrap;
  mask-image: linear-gradient(90deg, #000 60%, transparent);
}
.new-tab {
  width: 90px;
  height: 68px;
  display: grid;
  place-items: center;
}

.toolbar {
  display: flex;
  align-items: center;
  height: 72px;
  padding: 0 12px;
}
.tool {
  flex: none;
  width: 64px;
  height: 56px;
  display: grid;
  place-items: center;
}
.omnibox {
  flex: 1;
  display: flex;
  align-items: center;
  height: 56px;
  margin: 0 12px;
  padding: 0 4px 0 20px;
  border-radius: 28px;
  background: #f1f3f4;
}
.omnibox input {
  flex: 1;
  min-width: 0;
  margin-left: 16px;
  padding: 0;
  border: 0;
  outline: 0;
  font: 28px Inter, "Noto Sans", sans-serif;
  color: transparent;
  background: linear-gradient(90deg, #202124 124px, #66696d 124px);
  background-clip: text;
}
.rule {
  width: 2px;
  height: 32px;
  margin: 0 22px 0 12px;
  background: #cfd0d2;
}
.avatar {
  width: 44px;
  height: 44px;
  margin-right: 10px;
}

.bookmarks {
  display: flex;
  align-items: center;
  height: 66px;
  padding: 0 30px 10px 28px;
  border-bottom: 2px solid #dadce0;
}
.bookmarks a {
  display: flex;
  align-items: center;
  gap: 16px;
  padding-right: 33px;
  white-space: nowrap;
}
.bookmarks a:nth-child(9) {
  padding-right: 56px;
}
.bookmarks .wide {
  width: 308px;
  padding-right: 0;
}
.bookmarks .more {
  margin-left: auto;
  margin-right: 20px;
}
.bookmarks .other {
  height: 32px;
  padding: 0 0 0 20px;
  border-left: 2px solid #d4d5d7;
}

.page {
  flex: 1;
  font-family: "Liberation Sans", Arial, sans-serif;
  font-size: 16px;
  line-height: 24px;
  color: #212529;
  background: radial-gradient(#000, #fff) 0 0 / 100% 510px;
}
.navbar {
  display: flex;
  align-items: center;
  gap: 16px;
  height: 56px;
  padding: 0 28px 0 16px;
  color: #0c0c0c;
  background: #fbe4c8;
}
.navbar .brand {
  margin-right: auto;
  font-size: 20px;
  font-weight: 700;
}
.card {
  width: 1110px;
  max-width: 100%;
  margin: 30px auto;
  padding: 100px;
  border-radius: 10px;
  background: #fcebd1;
  box-shadow: 0 8px 24px rgba(0, 0, 0, 0.25);
}
.card p {
  margin: 0 0 16px;
  font-size: 22px;
  line-height: 36px;
}
table {
  width: 100%;
  margin-bottom: 16px;
  border-collapse: collapse;
  table-layout: fixed;
}
th,
td {
  padding: 12px;
  border: 2px solid #e9eaeb;
  text-align: left;
  vertical-align: bottom;
}
.action {
  width: 120px;
  word-break: break-all;
}
td a {
  padding: 0 5px;
  color: #2f7bf6;
}

.shelf {
  display: flex;
  align-items: center;
  height: 98px;
  padding: 0 20px 0 8px;
  border-top: 2px solid #dadce0;
  background: linear-gradient(#fff 50%, #ededed);
}
.download {
  width: 454px;
  height: 72px;
  display: flex;
  align-items: center;
  padding: 0 30px 0 36px;
  border-right: 2px solid #c9cacc;
  font-size: 27px;
}
.file {
  width: 24px;
  height: 30px;
  margin-right: 30px;
}
.download span {
  flex: 1;
  padding-top: 6px;
  white-space: nowrap;
}
.show-all {
  width: 162px;
  height: 64px;
  margin: 0 20px 0 auto;
  border: 2px solid #dadce0;
  border-radius: 8px;
}
.shelf-close {
  color: #6e6e6e;
}

.statusbar {
  display: flex;
  align-items: center;
  height: 44px;
  margin-top: -20px;
  padding: 0 28px 0 26px;
  border-radius: 0 0 20px 20px;
  font-size: 24px;
  color: #a9b5be;
  background: linear-gradient(90deg, #0062a6, #00508a 8%, #00508a 92%, #0062a6);
}
.statusbar > span {
  margin-right: 32px;
  white-space: nowrap;
}
.statusbar > .branch {
  margin: 0 30px 0 6px;
}
.statusbar .sync {
  margin-right: 26px;
}
.statusbar > .count {
  margin: 0 6px 0 4px;
}
.statusbar > .reader {
  margin: 0 16px 0 auto;
  padding: 0 20px;
  line-height: 44px;
  background: #002744;
}
.statusbar .person {
  margin-right: 26px;
}

.dock {
  display: flex;
  align-self: center;
  margin: 2px 0 10px;
  padding: 15px 15px 2px;
  border: 2px solid rgba(255, 255, 255, 0.22);
  border-radius: 36px;
  background: linear-gradient(90deg, #5f7ba3, #6e7aa8 22%, #797aab 45%, #8679ac 68%, #94749f 86%, #a877a5);
}
.group {
  display: flex;
  gap: 22px;
}
.group + .group {
  margin-left: 31px;
  padding-left: 31px;
  border-left: 2px solid rgba(50, 30, 80, 0.55);
}
.group button {
  position: relative;
  width: 72px;
  height: 91px;
  display: flex;
  align-items: flex-start;
}
.group svg {
  display: block;
  width: 72px;
  height: 72px;
  overflow: visible;
  filter: drop-shadow(0 1px 2px rgba(0, 0, 0, 0.3));
}
.group button.open::after {
  content: "";
  position: absolute;
  left: 32px;
  bottom: 0;
  width: 8px;
  height: 8px;
  border-radius: 50%;
  background: #120636;
}
.badge {
  position: absolute;
  top: -9px;
  right: -9px;
  width: 34px;
  line-height: 34px;
  border-radius: 50%;
  font-size: 20px;
  color: #fff;
  background: #e25648;
}
</style>
